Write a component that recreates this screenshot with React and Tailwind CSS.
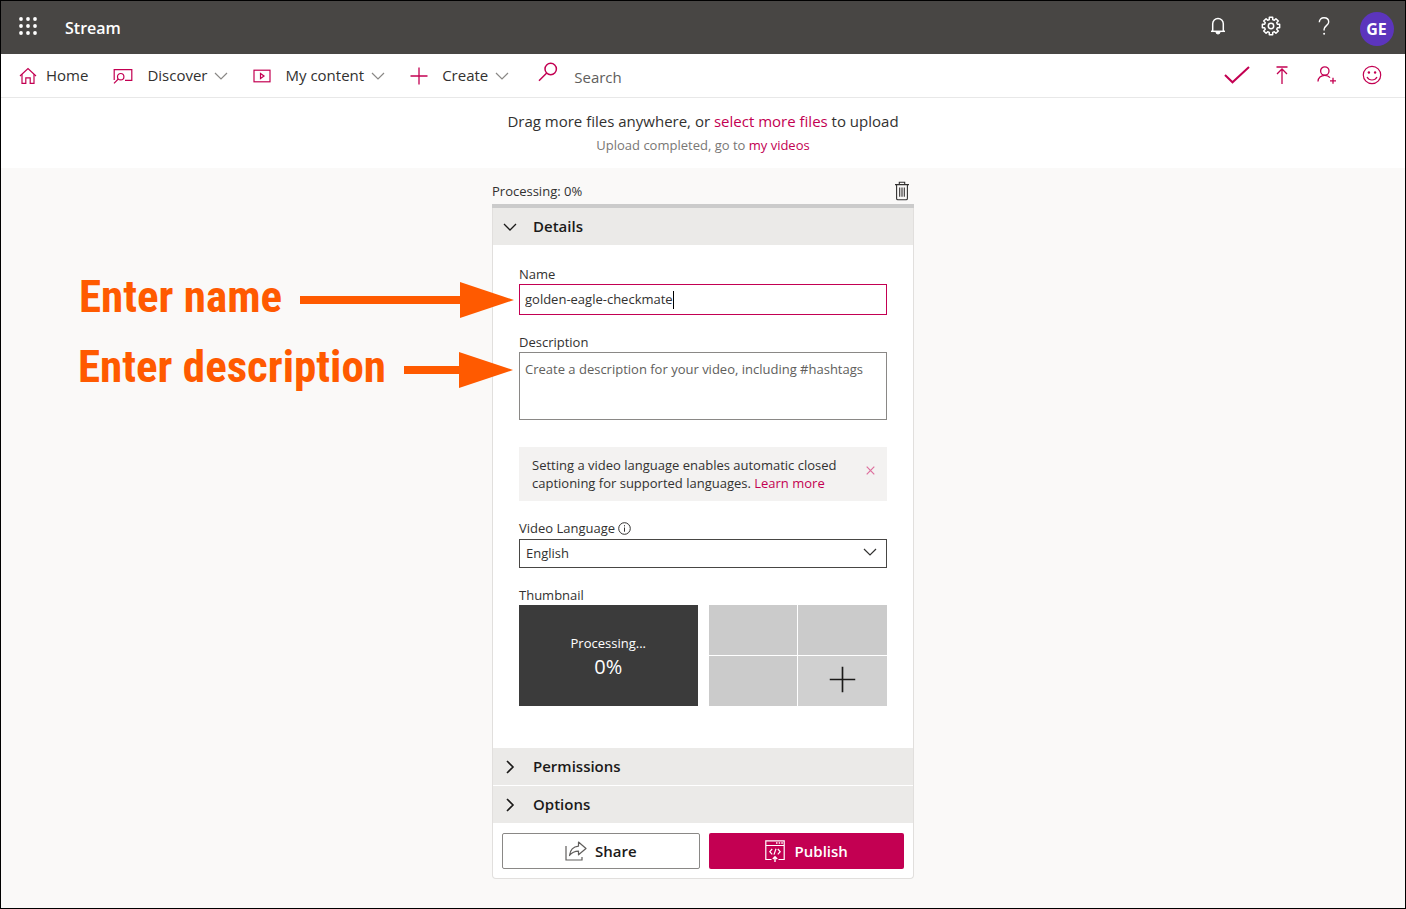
import { useState } from 'react'

function Chevron({ className, width = 1.2 }) {
  return (
    <svg className={className} viewBox="0 0 14 14" fill="none" stroke="currentColor" strokeWidth={width}>
      <path d="M1 4l6 6 6-6" />
    </svg>
  )
}

function WaffleIcon() {
  return (
    <svg className="w-[18px] h-[18px]" viewBox="0 0 18 18" fill="currentColor">
      {[2, 9, 16].map((y) => [2, 9, 16].map((x) => <circle key={`${x}-${y}`} cx={x} cy={y} r="1.9" />))}
    </svg>
  )
}

function BellIcon() {
  return (
    <svg className="w-[18px] h-[18px]" viewBox="0 0 18 18" fill="none" stroke="currentColor" strokeWidth="1.5">
      <path d="M3.7 14V6.8a5.3 5.3 0 0 1 10.6 0V14" />
      <path d="M2 14.3h14" />
      <path d="M7 15a2 2 0 0 0 4 0z" fill="currentColor" strokeWidth="1" />
    </svg>
  )
}

// Outline of eight teeth: outer corners at 8.8, notches at 6.6
const gearPoints = Array.from({ length: 8 }, (_, i) => i * 45)
  .flatMap((a) => [
    [a - 15, 6.6],
    [a - 11, 8.8],
    [a + 11, 8.8],
    [a + 15, 6.6],
  ])
  .map(([deg, r]) => {
    const rad = (deg * Math.PI) / 180
    return `${(10 + r * Math.cos(rad)).toFixed(2)},${(10 + r * Math.sin(rad)).toFixed(2)}`
  })
  .join(' ')

function GearIcon() {
  return (
    <svg className="w-5 h-5" viewBox="0 0 20 20" fill="none" stroke="currentColor" strokeWidth="1.5" strokeLinejoin="round">
      <polygon points={gearPoints} />
      <circle cx="10" cy="10" r="2.7" />
    </svg>
  )
}

function HelpIcon() {
  return (
    <svg className="w-3 h-[18px]" viewBox="0 0 12 18" fill="none" stroke="currentColor" strokeWidth="1.4">
      <path d="M1.3 5.3C1.3 2.5 3.3.8 6 .8s4.7 1.7 4.7 4.2c0 3.3-4.6 3.9-4.6 7.2v1.3" />
      <circle cx="6.1" cy="16.7" r="1" fill="currentColor" stroke="none" />
    </svg>
  )
}

function HomeIcon() {
  return (
    <svg className="w-[18px] h-[18px]" viewBox="0 0 18 18" fill="none" stroke="currentColor" strokeWidth="1.2">
      <path d="M1 9l8-7.5L17 9" />
      <path d="M3 7.3v9.1h3.8v-5.6h4.4v5.6H15V7.3" />
    </svg>
  )
}

function DiscoverIcon() {
  return (
    <svg className="w-5 h-4" viewBox="0 0 20 16" fill="none" stroke="currentColor" strokeWidth="1.2">
      <path d="M1.2 12V1.6h17.6v10.8H12" />
      <circle cx="7.7" cy="8.7" r="3.2" />
      <path d="M5.3 11L1 15.3" />
    </svg>
  )
}

function PlayBoxIcon() {
  return (
    <svg className="w-[18px] h-[14px]" viewBox="0 0 18 14" fill="none" stroke="currentColor" strokeWidth="1.2">
      <rect x="1" y="1.2" width="16" height="11.6" />
      <path d="M7.5 4.5v5L11 7z" />
    </svg>
  )
}

function PlusIcon({ className, width = 1.3 }) {
  return (
    <svg className={className} viewBox="0 0 18 18" fill="none" stroke="currentColor" strokeWidth={width}>
      <path d="M9 .5v17M.5 9h17" />
    </svg>
  )
}

function SearchIcon() {
  return (
    <svg className="w-5 h-5" viewBox="0 0 20 20" fill="none" stroke="currentColor" strokeWidth="1.5">
      <circle cx="12.7" cy="7" r="5.7" />
      <path d="M8.7 11L1 18.7" />
    </svg>
  )
}

function CheckIcon() {
  return (
    <svg className="w-[26px] h-[18px]" viewBox="0 0 26 18" fill="none" stroke="currentColor" strokeWidth="2">
      <path d="M1 9l7.5 7.3L25 1" />
    </svg>
  )
}

function UploadIcon() {
  return (
    <svg className="w-3 h-[18px]" viewBox="0 0 12 18" fill="none" stroke="currentColor" strokeWidth="1.3">
      <path d="M.5 1h11M6 3v15M1 8l5-5 5 5" />
    </svg>
  )
}

function AddPersonIcon() {
  return (
    <svg className="w-5 h-[18px]" viewBox="0 0 20 18" fill="none" stroke="currentColor" strokeWidth="1.3">
      <circle cx="7.8" cy="5" r="4.2" />
      <path d="M1 15.5c0-3.7 3-6.2 6.8-6.2 2.2 0 4 .8 5.2 2.3" />
      <path d="M16 11.8v6M13 14.8h6" />
    </svg>
  )
}

function SmileIcon() {
  return (
    <svg className="w-5 h-5" viewBox="0 0 20 20" fill="none" stroke="currentColor" strokeWidth="1.2">
      <circle cx="10" cy="10" r="8.7" />
      <path d="M5 12c1 1.9 2.8 3 5 3s4-1.1 5-3" />
      <circle cx="6.9" cy="7.5" r="1.2" fill="currentColor" stroke="none" />
      <circle cx="13.1" cy="7.5" r="1.2" fill="currentColor" stroke="none" />
    </svg>
  )
}

function TrashIcon() {
  return (
    <svg className="w-4 h-5" viewBox="0 0 16 20" fill="none" stroke="currentColor" strokeWidth="1.1">
      <path d="M1 3.6h14M5.3 3.4V1.3h5.4v2.1M2.6 3.6v13.8q0 1.3 1.3 1.3h8.2q1.3 0 1.3-1.3V3.6" />
      <path d="M5.7 6.5v9.3M8 6.5v9.3M10.3 6.5v9.3" />
    </svg>
  )
}

function ShareIcon() {
  return (
    <svg className="w-[22px] h-5" viewBox="0 0 22 20" fill="none" stroke="currentColor" strokeWidth="1.2">
      <path d="M1 5v14h16v-3" />
      <path d="M13.5 1L21 7.5l-7.5 6.3v-3.7c-4 0-6.5 1.2-9 4.4.6-5.5 3.7-8.9 9-9.4z" strokeLinejoin="round" />
    </svg>
  )
}

function PublishIcon() {
  return (
    <svg className="w-5 h-[22px]" viewBox="0 0 20 22" fill="none" stroke="currentColor" strokeWidth="1.2">
      <path d="M6.5 19.5H.8V.8h18.4v18.7h-5.7M.8 5.5h18.4" />
      <path d="M11 3.1h1.5M13.7 3.1h1.5M16.3 3.1h1.5" strokeWidth="1.5" />
      <path d="M7.2 9l-2.4 2.7 2.4 2.7M12.8 9l2.4 2.7-2.4 2.7M11 8.8l-2 5.8" />
      <path d="M10 22v-4.5M7.8 19l2.2-2.2 2.2 2.2" strokeWidth="1.4" />
    </svg>
  )
}

// Label with an arrow that points at the field it is placed in
function Callout({ text }) {
  return (
    <div className="absolute right-full top-1/2 -translate-y-1/2 mr-1.5 w-[435px] flex items-center gap-[18px] text-[#ff5a00] pointer-events-none">
      <span className="pb-1.5 font-['Roboto_Condensed','Arial_Narrow',sans-serif] font-bold text-[45px] leading-[48px] whitespace-nowrap">
        {text}
      </span>
      <span className="flex flex-1 items-center">
        <span className="flex-1 h-2 bg-[#ff5a00]"></span>
        <svg className="w-[54px] h-9" viewBox="0 0 54 36" fill="currentColor">
          <path d="M0 0l54 18L0 36z" />
        </svg>
      </span>
    </div>
  )
}

function Section({ title, open, onClick }) {
  return (
    <button
      type="button"
      onClick={onClick}
      aria-expanded={open}
      className="flex w-full h-[37px] items-center gap-4 px-2.5 bg-[#ebeae8] text-[15px] font-semibold text-[#1b1a19]"
    >
      <Chevron className={open ? 'w-[14px] h-[14px]' : 'w-[14px] h-[14px] -rotate-90'} width={open ? 1.3 : 1.6} />
      {title}
    </button>
  )
}

const headerActions = [
  { label: 'Notifications', Icon: BellIcon },
  { label: 'Settings', Icon: GearIcon },
  { label: 'Help', Icon: HelpIcon },
]

const navActions = [
  { label: 'Approved', Icon: CheckIcon },
  { label: 'Uploads', Icon: UploadIcon },
  { label: 'Invite people', Icon: AddPersonIcon },
  { label: 'Feedback', Icon: SmileIcon },
]

const navMenus = [
  { label: 'Discover', icon: <DiscoverIcon /> },
  { label: 'My content', icon: <PlayBoxIcon /> },
  { label: 'Create', icon: <PlusIcon className="w-[18px] h-[18px]" /> },
]

function TopBar() {
  return (
    <header className="flex h-[53px] items-center bg-[#484644] pl-[18px] pr-0.5 text-white">
      <button type="button" aria-label="App launcher" className="pb-1">
        <WaffleIcon />
      </button>
      <span className="ml-7 text-base font-semibold">Stream</span>
      <div className="ml-auto flex items-center pt-0.5">
        {headerActions.map(({ label, Icon }) => (
          <button key={label} type="button" aria-label={label} className="flex w-[53px] justify-center pb-1.5">
            <Icon />
          </button>
        ))}
        <button type="button" className="flex w-[53px] justify-center">
          <span className="flex w-[34px] h-[34px] items-center justify-center rounded-full bg-[#5c35bd] text-base font-bold">
            GE
          </span>
        </button>
      </div>
    </header>
  )
}

function NavBar() {
  return (
    <nav className="flex h-11 items-center border-b border-[#e8e8e8] bg-white pl-[18px] pr-[11px] text-[15px] text-[#323130]">
      <a href="#home" className="flex items-center gap-[9px]">
        <span className="text-[#c30052]"><HomeIcon /></span>
        Home
      </a>
      {navMenus.map(({ label, icon }) => (
        <button key={label} type="button" className="ml-[25px] flex items-center">
          <span className="mr-[14px] text-[#c30052]">{icon}</span>
          {label}
          <Chevron className="ml-[7px] w-[14px] h-[14px] text-[#8a8886]" />
        </button>
      ))}
      <label className="ml-[29px] flex flex-1 items-center gap-4">
        <span className="pb-2 text-[#c30052]"><SearchIcon /></span>
        <input
          type="search"
          aria-label="Search"
          placeholder="Search"
          className="w-40 bg-transparent pt-1 outline-none placeholder:text-[#605e5c]"
        />
      </label>
      <div className="flex items-center pb-0.5 text-[#c30052]">
        {navActions.map(({ label, Icon }) => (
          <button key={label} type="button" aria-label={label} className="flex w-[45px] justify-center">
            <Icon />
          </button>
        ))}
      </div>
    </nav>
  )
}

function DetailsForm() {
  const [name, setName] = useState('golden-eagle-checkmate')
  const [description, setDescription] = useState('')
  const [showTip, setShowTip] = useState(true)

  return (
    <div className="px-[26px] pt-[19px] pb-[42px]">
      <label htmlFor="name" className="block leading-5">Name</label>
      <div className="relative flex h-[31px] items-center border border-[#c30052] px-[5px]">
        <Callout text="Enter name" />
        <input
          id="name"
          type="text"
          value={name}
          onChange={(e) => setName(e.target.value)}
          className="field-sizing-content max-w-full outline-none caret-transparent"
        />
        <span className="w-px h-[18px] bg-black"></span>
      </div>

      <label htmlFor="description" className="mt-[17px] block leading-5">Description</label>
      <div className="relative">
        <textarea
          id="description"
          value={description}
          onChange={(e) => setDescription(e.target.value)}
          placeholder="Create a description for your video, including #hashtags"
          className="block w-full h-[68px] resize-none border border-[#8a8886] px-[5px] py-1.5 leading-5 outline-none placeholder:text-[#605e5c]"
        />
        <div className="absolute left-0 top-0 h-9">
          <Callout text="Enter description" />
        </div>
      </div>

      {showTip && (
        <div className="mt-[27px] flex items-start justify-between bg-[#f3f2f1] py-[9px] pl-[13px] pr-3">
          <p className="leading-[18px]">
            Setting a video language enables automatic closed
            <br />
            captioning for supported languages. <a href="#learn" className="text-[#c30052]">Learn more</a>
          </p>
          <button type="button" aria-label="Dismiss" onClick={() => setShowTip(false)} className="mt-2.5">
            <svg className="w-[9px] h-[9px] text-[#dd6f9d]" viewBox="0 0 9 9" fill="none" stroke="currentColor" strokeWidth="1.2">
              <path d="M.7.7l7.6 7.6M8.3.7L.7 8.3" />
            </svg>
          </button>
        </div>
      )}

      <label htmlFor="language" className="mt-[17px] mb-px flex items-center gap-[3px] leading-5">
        Video Language
        <svg className="w-[13px] h-[13px]" viewBox="0 0 13 13" fill="none" stroke="currentColor" strokeWidth="1">
          <circle cx="6.5" cy="6.5" r="5.8" />
          <path d="M6.5 5.5v4.2M6.5 3.2v1.2" />
        </svg>
      </label>
      <div className="relative">
        <select id="language" defaultValue="English" className="block w-full h-[29px] appearance-none border border-[#484644] bg-white px-1.5">
          <option>English</option>
          <option>French</option>
          <option>Spanish</option>
        </select>
        <Chevron className="pointer-events-none absolute right-2.5 top-1.5 w-[14px] h-[14px]" />
      </div>

      <p className="mt-[17px] leading-5">Thumbnail</p>
      <div className="flex gap-[11px]">
        <div className="flex flex-1 h-[101px] flex-col items-center justify-center bg-[#3b3b3b] pb-0.5 text-white">
          <span className="leading-6">Processing...</span>
          <span className="text-xl leading-6">0%</span>
        </div>
        <div className="grid flex-1 h-[101px] grid-cols-2 grid-rows-2 gap-px bg-white">
          <div className="bg-[#cbcbcb]"></div>
          <div className="bg-[#cbcbcb]"></div>
          <div className="bg-[#cbcbcb]"></div>
          <button type="button" aria-label="Add thumbnail" className="flex items-center justify-center bg-[#d0d0d0] pb-1 text-[#1b1a19]">
            <PlusIcon className="w-[27px] h-[27px]" width={1.1} />
          </button>
        </div>
      </div>
    </div>
  )
}

function App() {
  const [open, setOpen] = useState(true)

  return (
    <div className="flex min-h-screen flex-col border border-black bg-[#faf9f8] font-['Segoe_UI','Open_Sans',sans-serif] text-[13px] text-[#323130]">
      <TopBar />
      <NavBar />

      <section className="h-[70px] bg-white pt-[11px] text-center">
        <p className="text-[15px] leading-6">
          Drag more files anywhere, or <a href="#select" className="text-[#c30052]">select more files</a> to upload
        </p>
        <p className="leading-6 text-[#797775]">
          Upload completed, go to <a href="#videos" className="text-[#c30052]">my videos</a>
        </p>
      </section>

      <main className="mx-auto w-full max-w-[422px] pt-3 pb-[29px]">
        <div className="flex h-6 items-center justify-between pr-1">
          <span>Processing: 0%</span>
          <button type="button" aria-label="Delete" className="pb-0.5">
            <TrashIcon />
          </button>
        </div>
        <div className="h-1 bg-[#cbcbcb]"></div>
        <div className="rounded-b-sm border border-t-0 border-[#e1dfdd] bg-white">
          <Section title="Details" open={open} onClick={() => setOpen(!open)} />
          {open && <DetailsForm />}
          <div className="flex flex-col gap-px">
            <Section title="Permissions" open={false} />
            <Section title="Options" open={false} />
          </div>
          <div className="flex gap-[9px] px-[9px] pt-2.5 pb-[9px] text-[15px] font-semibold">
            <button type="button" className="flex flex-1 h-9 items-center justify-center gap-2 rounded-xs border border-[#8a8886] text-[#1b1a19]">
              <span className="text-[#605e5c]"><ShareIcon /></span>
              Share
            </button>
            <button type="button" className="flex flex-1 h-9 items-center justify-center gap-2.5 rounded-xs bg-[#c30052] text-white">
              <PublishIcon />
              Publish
            </button>
          </div>
        </div>
      </main>
    </div>
  )
}

export default App
